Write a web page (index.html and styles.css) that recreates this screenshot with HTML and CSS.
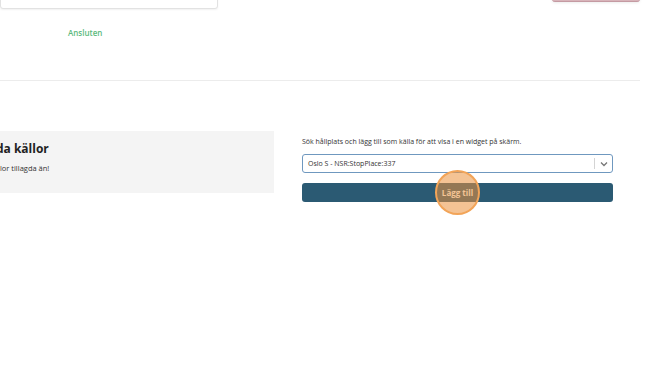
FILE: index.html
```html
<!DOCTYPE html>
<html lang="sv">
<head>
<meta charset="utf-8">
<link rel="stylesheet" href="styles.css">
</head>
<body>
<div class="page">
  <section class="top">
    <div class="top-row">
      <div class="field-box"></div>
      <div class="danger-btn"></div>
    </div>
    <div class="status">Ansluten</div>
  </section>
  <section class="sources">
    <div class="panel">
      <h2 class="panel-title">Tillagda källor</h2>
      <p class="panel-text">Inga källor tillagda än!</p>
    </div>
    <div class="add-col">
      <p class="hint">Sök hållplats och lägg till som källa för att visa i en widget på skärm.</p>
      <div class="select">
        <span class="select-value">Oslo S - NSR:StopPlace:337</span>
        <span class="select-sep"></span>
        <svg class="chev" width="8" height="6" viewBox="0 0 8 6"><path d="M1 1.5 L4 4.5 L7 1.5" fill="none" stroke="#777" stroke-width="1.3"/></svg>
      </div>
      <button class="add-btn">Lägg till<span class="highlight"></span></button>
    </div>
  </section>
</div>
</body>
</html>
```
FILE: styles.css
```css
* { box-sizing: border-box; }
html, body { margin: 0; padding: 0; background: #fff; }
body { font-family: "Open Sans", "Noto Sans", sans-serif; color: #222; overflow: hidden; width: 670px; height: 374px; }
.page { width: 640px; }
.top { height: 81px; border-bottom: 1px solid #ececec; }
.top-row { display: flex; justify-content: space-between; align-items: flex-start; }
.field-box {
  width: 218px; height: 30px; margin-top: -21px;
  border: 1px solid #e2e2e2; border-radius: 3px; background: #fff;
  box-shadow: 0 1px 2px rgba(0,0,0,0.06);
}
.danger-btn {
  width: 88px; height: 20px; margin-top: -18px;
  background: #d8b4ba; border-bottom: 1px solid #c49aa2; border-radius: 3px;
  box-shadow: 0 1px 3px rgba(0,0,0,0.08);
}
.status {
  margin: 18px 0 0 68px;
  font-size: 8px; font-weight: 600; color: #5cba7d; line-height: 12px;
}
.sources { display: flex; align-items: flex-start; gap: 28px; margin-top: 50px; }
.panel {
  width: 330px; height: 62px; margin-left: -56px;
  background: #f4f4f4; padding: 9px 20px;
}
.panel-title { margin: 0; font-size: 12px; font-weight: 700; line-height: 18px; color: #222; }
.panel-text { margin: 5px 0 0 9px; font-size: 7.5px; line-height: 10px; color: #333; }
.add-col { width: 311px; padding-top: 6px; }
.hint { margin: 0; font-size: 7px; line-height: 10px; color: #333; }
.select {
  margin-top: 7px; height: 19px; border: 1px solid #6f98bf; border-radius: 3px;
  display: flex; align-items: center; padding: 0 4px 0 5px; background: #fff;
}
.select-value { flex: 1; font-size: 7px; color: #333; }
.select-sep { width: 1px; height: 11px; background: #d4d4d4; margin-right: 5px; }
.chev { display: block; }
.add-btn {
  position: relative; display: block; width: 100%; height: 19px; margin-top: 10px;
  border: 0; border-radius: 3px; background: #2b5a73; color: #fff;
  font-family: "Open Sans", sans-serif; font-size: 8px; font-weight: 700; padding: 0;
}
.highlight {
  position: absolute; left: 50%; top: 50%; width: 45px; height: 45px;
  margin: -23px 0 0 -22.5px; border-radius: 50%;
  background: rgba(235, 145, 60, 0.55); border: 2px solid #f2a458;
}
```
